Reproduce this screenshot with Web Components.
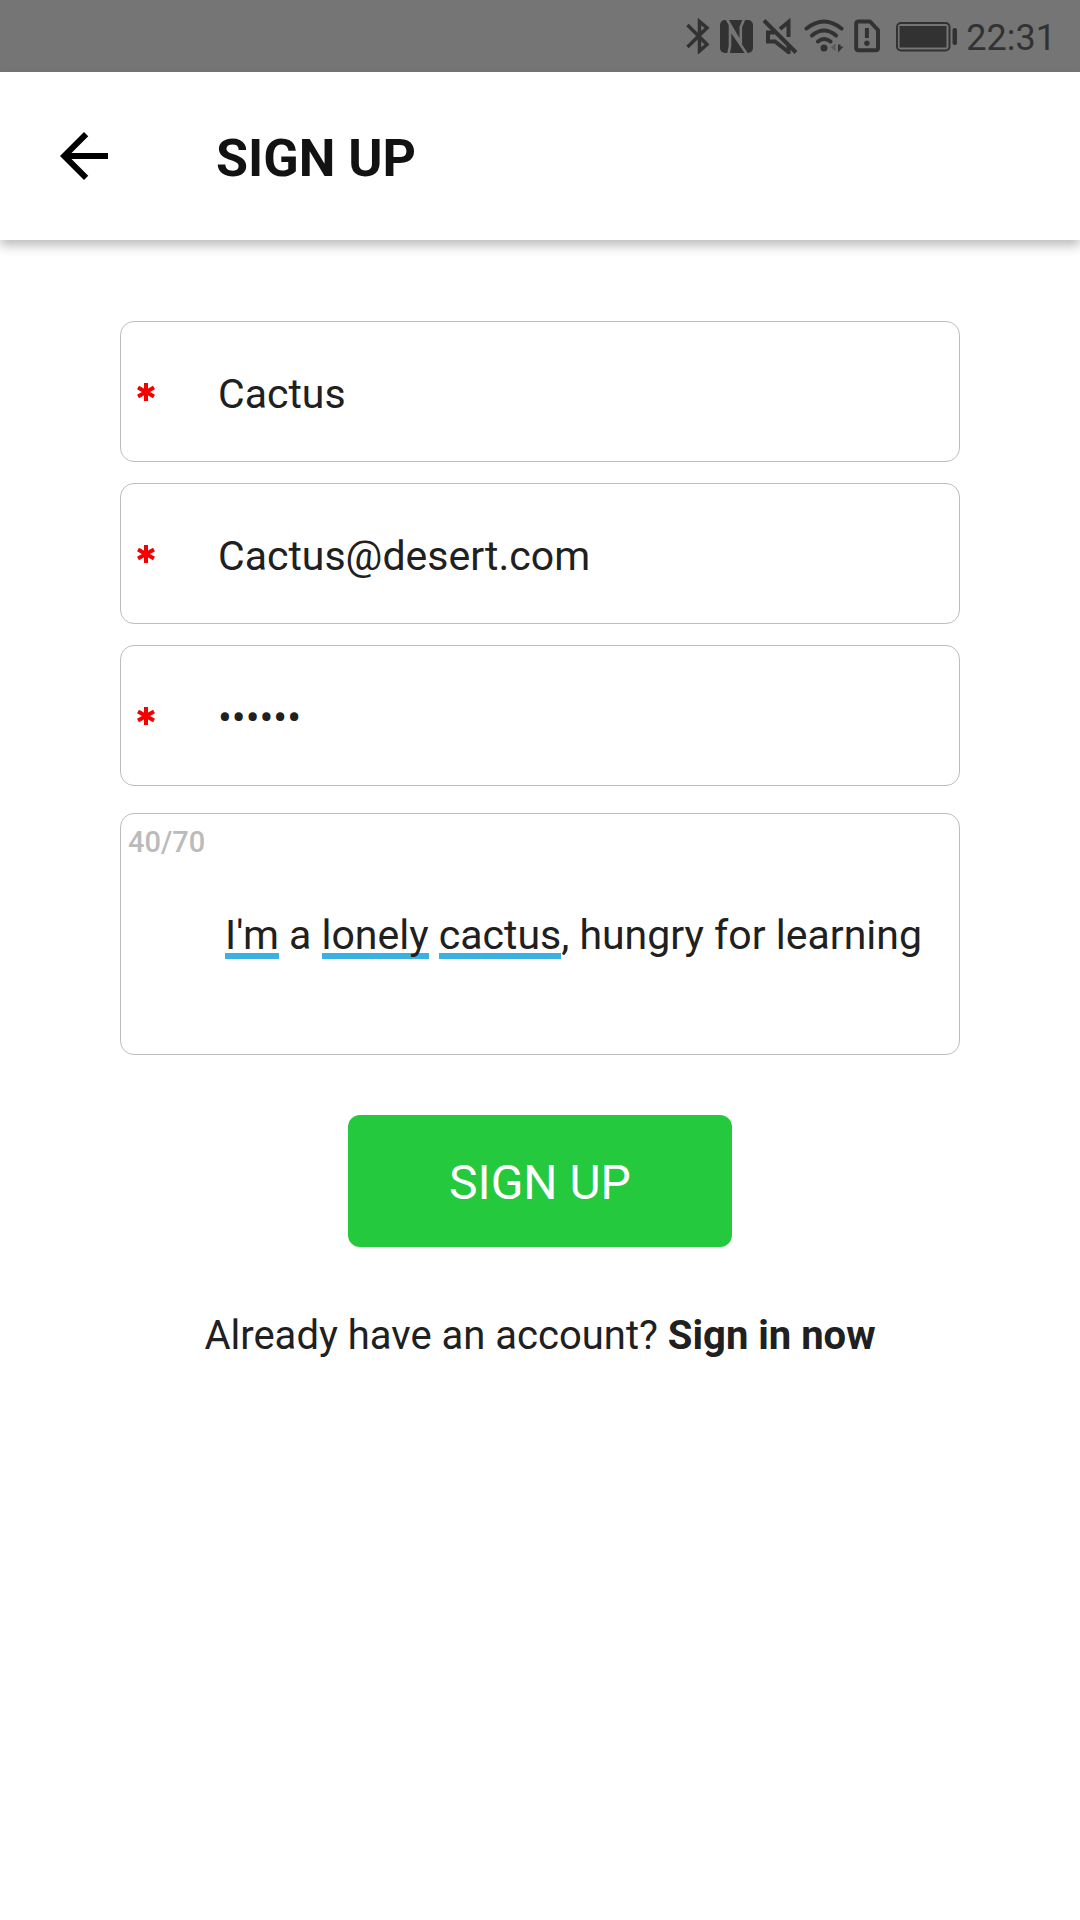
<!DOCTYPE html>
<html lang="en">
<head>
<meta charset="utf-8">
<meta name="viewport" content="width=device-width, initial-scale=1">
<title>Sign up</title>
<style>
  body { margin: 0; background: #fff; font-family: Roboto, "Liberation Sans", sans-serif; color: #202020; }
</style>
</head>
<body>
<signup-screen></signup-screen>

<template id="status-bar">
  <style>
    :host { display: flex; align-items: center; justify-content: flex-end; gap: 6px; height: 72px; padding-right: 24px; background: #757575; color: #323232; }
    svg { display: block; height: 36px; fill: none; stroke: currentColor; stroke-width: 4; }
    time { font-size: 36px; line-height: 42px; padding-top: 3px; }
    .solid { fill: currentColor; stroke: none; }
  </style>
  <svg width="28" viewBox="0 0 28 36" aria-hidden="true"><path stroke-width="3.500" d="M1.500 7 21 26.500 13.500 33V3.500L21 9.800 1.500 29"/></svg>
  <svg width="36" viewBox="0 0 36 36" aria-hidden="true"><rect class="solid" y="2" width="33" height="33" rx="5"/><path stroke="#757575" stroke-width="2.600" d="M7 1.500 20.800 25V8M26.500 35.500 10 11V29M20.800 9 24 1.500M10 28 8.500 35.500"/></svg>
  <svg width="36" viewBox="0 0 36 36" aria-hidden="true"><path d="M2 2.500 34 34.500M18 11 26.500 4V19M12.500 14.500H6V23.500H13L26.500 34V28"/></svg>
  <svg width="44" viewBox="0 0 44 36" aria-hidden="true"><path stroke-linecap="round" d="M2.500 10.500Q20-3.500 37.500 10.500M8 17.500Q20 7.500 32 17.500M14 23.500Q20 18.500 26.500 23.500"/><circle class="solid" cx="20" cy="30" r="3.500"/><path class="solid" d="M34 26.500V34.500L39.500 28.500H36.500V26.500Z"/><path class="solid" opacity=".4" d="M31.500 25V33L27 29.500Z"/></svg>
  <svg width="36" viewBox="0 0 36 36" aria-hidden="true"><path stroke-linejoin="round" d="M4.500 3.500H16L24 12V30Q24 32.300 21.500 32.300H4.500Q2.200 32.300 2.200 30V6Q2.200 3.500 4.500 3.500Z"/><path d="M12.900 10V20"/><circle class="solid" cx="12.900" cy="25.300" r="2.700"/></svg>
  <svg width="64" viewBox="0 0 64 36" aria-hidden="true"><rect x="1" y="5" width="52.500" height="27.500" rx="4" stroke-width="2"/><rect class="solid" x="3.500" y="8" width="47" height="21.500"/><rect class="solid" x="56.500" y="10" width="4.500" height="17" rx="2"/></svg>
  <time datetime="22:31">22:31</time>
</template>

<template id="app-bar">
  <style>
    :host { display: flex; align-items: center; gap: 96px; height: 168px; padding: 0 48px; box-sizing: border-box; background: #fff; box-shadow: 0 6px 10px rgba(0, 0, 0, .25); }
    button { width: 72px; height: 72px; padding: 0 12px; border: 0; background: none; cursor: pointer; }
    svg { display: block; width: 48px; height: 48px; fill: #000; }
    h1 { margin: 0; padding-top: 6px; font-size: 52px; line-height: 60px; font-weight: 700; color: #121212; }
  </style>
  <button type="button" aria-label="Back"><svg viewBox="4 4 16 16"><path d="M20 11H7.830l5.590-5.590L12 4l-8 8 8 8 1.410-1.410L7.830 13H20v-2z"/></svg></button>
  <h1><slot></slot></h1>
</template>

<template id="form-field">
  <style>
    :host { display: flex; align-items: center; height: 141px; box-sizing: border-box; padding: 0 16px; border: 1px solid #bdbdbd; border-radius: 14px; background: #fff; }
    label { display: block; padding-right: 63px; }
    svg { display: block; width: 18px; height: 18px; stroke: #f30000; stroke-width: 4; }
    input { flex: 1; min-width: 0; margin: 0; border: 0; padding: 4px 0 0; outline: 0; background: none; font: 400 41px/48px Roboto, sans-serif; color: #202020; }
  </style>
  <label for="control"><svg viewBox="0 0 18 18"><path d="M9 0V18M1 4.500 17 13.500M17 4.500 1 13.500"/></svg></label>
  <input id="control">
</template>

<template id="bio-field">
  <style>
    :host { display: flex; flex-direction: column; height: 242px; box-sizing: border-box; padding: 9px 7px; border: 1px solid #bdbdbd; border-radius: 14px; background: #fff; }
    label { font-size: 29px; line-height: 38px; font-weight: 500; color: #bbb; }
    textarea { flex: 1; margin: 0; border: 0; padding: 50px 0 0 97px; outline: 0; resize: none; overflow: hidden; font: 400 41px/48px Roboto, sans-serif; color: #202020; background-color: transparent; background-origin: content-box; background-repeat: no-repeat; }
  </style>
  <label for="bio"></label>
  <textarea id="bio" aria-label="About you" spellcheck="false"></textarea>
</template>

<template id="signup-screen">
  <style>
    :host { display: flex; flex-direction: column; min-height: 100vh; background: #fff; }
    form { display: flex; flex-direction: column; gap: 21px; padding: 81px 120px 0; }
    bio-field { margin-top: 6px; }
    .submit { align-self: center; width: 384px; height: 132px; margin-top: 39px; padding: 4px 0 0; border: 0; border-radius: 12px; background: #24c93d; color: #fff; font: 400 48px/56px Roboto, sans-serif; cursor: pointer; }
    p { margin: 0; padding-top: 65px; text-align: center; font-size: 40px; line-height: 48px; }
    a { color: inherit; font-weight: 700; text-decoration: none; }
  </style>
  <status-bar></status-bar>
  <app-bar>SIGN UP</app-bar>
  <form>
    <form-field label="Name" type="text" value="Cactus"></form-field>
    <form-field label="Email" type="email" value="Cactus@desert.com"></form-field>
    <form-field label="Password" type="password" value="cactus"></form-field>
    <bio-field max="70" value="I'm a lonely cactus, hungry for learning" marks="I'm,lonely,cactus"></bio-field>
    <button class="submit" type="button">SIGN UP</button>
  </form>
  <p>Already have an account? <a href="#signin">Sign in now</a></p>
</template>

<script>
  class Base extends HTMLElement {
    connectedCallback() {
      if (this.shadowRoot) return;
      this.attachShadow({ mode: 'open' }).append(
        document.getElementById(this.localName).content.cloneNode(true));
      this.ready();
    }
    ready() {}
  }
  class StatusBar extends Base {}
  class AppBar extends Base {}
  class FormField extends Base {
    ready() {
      const input = this.shadowRoot.querySelector('input');
      input.type = this.getAttribute('type');
      input.value = this.getAttribute('value');
      input.required = true;
      input.spellcheck = false;
      input.setAttribute('aria-label', this.getAttribute('label'));
    }
  }
  class BioField extends Base {
    ready() {
      this.area = this.shadowRoot.querySelector('textarea');
      this.area.value = this.getAttribute('value');
      this.area.maxLength = Number(this.getAttribute('max'));
      this.area.addEventListener('input', () => this.update());
      this.update();
    }
    update() {
      const text = this.area.value;
      this.shadowRoot.querySelector('label').textContent = text.length + '/' + this.getAttribute('max');
      const pen = document.createElement('canvas').getContext('2d');
      pen.font = '400 41px Roboto, sans-serif';
      const bars = this.getAttribute('marks').split(',').filter(w => text.includes(w)).map(w => ({
        x: Math.round(pen.measureText(text.slice(0, text.indexOf(w))).width),
        w: Math.round(pen.measureText(w).width)
      }));
      this.area.style.backgroundImage = bars.map(() => 'linear-gradient(#3bb0e2, #3bb0e2)').join();
      this.area.style.backgroundSize = bars.map(b => b.w + 'px 6px').join();
      this.area.style.backgroundPosition = bars.map(b => b.x + 'px 42px').join();
    }
  }
  class SignupScreen extends Base {}
  customElements.define('status-bar', StatusBar);
  customElements.define('app-bar', AppBar);
  customElements.define('form-field', FormField);
  customElements.define('bio-field', BioField);
  customElements.define('signup-screen', SignupScreen);
</script>
</body>
</html>
